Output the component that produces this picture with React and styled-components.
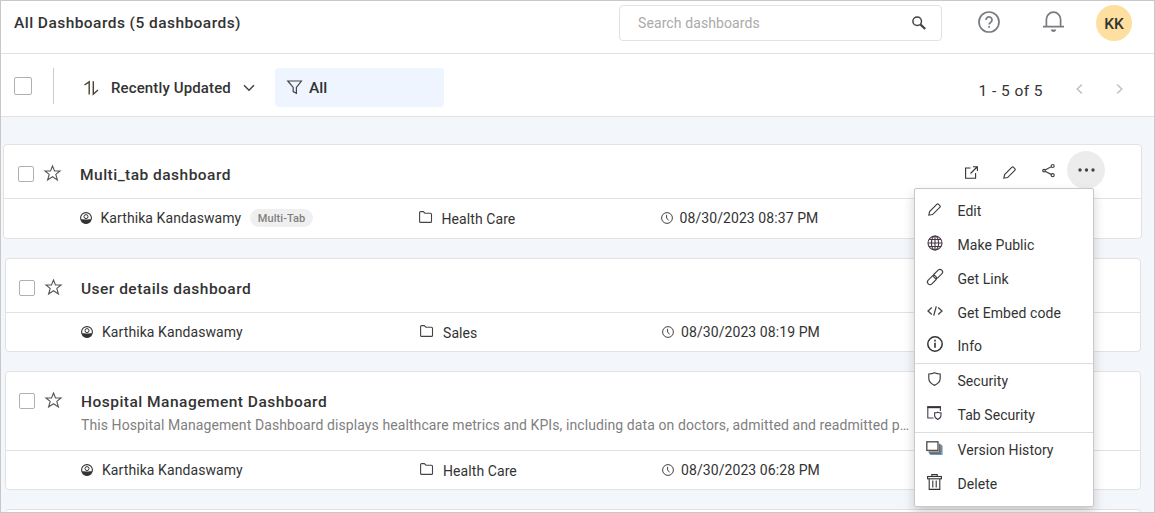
import React from "react";
import styled, { createGlobalStyle } from "styled-components";

const GlobalStyle = createGlobalStyle`
  * { box-sizing: border-box; }
  body {
    margin: 0;
    font-family: Roboto, "Liberation Sans", sans-serif;
    color: #333;
    background: #fff;
  }
`;

const Frame = styled.div`
  position: relative;
  display: flex;
  flex-direction: column;
  width: 1155px;
  height: 513px;
  border: 1px solid #c8c8c8;
  overflow: hidden;
  background: #f3f6fa;
`;

const Svg = styled.svg`
  display: block;
  flex: none;
  fill: none;
  stroke: ${(p) => p.$color || "#333"};
  stroke-width: ${(p) => p.$stroke || 1};
  overflow: visible;
`;

const Icon = ({ w = 16, h = w, color, stroke, children }) => (
  <Svg width={w} height={h} viewBox={`0 0 ${w} ${h}`} $color={color} $stroke={stroke} aria-hidden="true">
    {children}
  </Svg>
);

const SearchIcon = () => (
  <Icon w={14} color="#444">
    <circle cx="5.2" cy="5.2" r="4.3" strokeWidth="1.5" />
    <path d="M8.4 8.4 L13.2 13" strokeWidth="2.2" />
  </Icon>
);
const HelpIcon = () => (
  <Icon w={22} color="#777b80" stroke={1.7}>
    <circle cx="11" cy="11" r="10" />
    <path d="M8 8.9a3 3 0 1 1 4.6 2.5c-1 .6-1.5 1-1.5 2.2" />
    <path d="M11.1 15v1.8" />
  </Icon>
);
const BellIcon = () => (
  <Icon w={21} h={22} color="#777b80" stroke={1.7}>
    <path d="M0 15.7h21M3.4 15.5V8.3a7.1 7.1 0 0 1 14.2 0v7.2" />
    <path d="M7.8 18.6h5.4c-.5 1.8-1.4 2.5-2.7 2.5s-2.2-.7-2.7-2.5z" fill="#777b80" stroke="none" />
  </Icon>
);
const SortIcon = () => (
  <Icon w={15} h={14} color="#4b4030" stroke={1.4}>
    <path d="M.5 4 L5.2 .8V13.5M9.3 .3V13.2L14 9" />
  </Icon>
);
const ChevronIcon = () => (
  <Icon w={12} h={8} color="#444" stroke={1.5}>
    <path d="M1 1.2 6 6.2 11 1.2" />
  </Icon>
);
const FunnelIcon = () => (
  <Icon w={15} h={14} color="#444" stroke={1.2}>
    <path d="M.8 1h13.6L9.4 7.4v5.8L6.2 11.6V7.4z" />
  </Icon>
);
const PageIcon = ({ next }) => (
  <Icon w={7} h={10} color="#c0c3c7" stroke={1.5}>
    <path d={next ? "M1.2.6 5.8 5 1.2 9.4" : "M5.8.6 1.2 5 5.8 9.4"} />
  </Icon>
);
const StarIcon = () => (
  <Icon w={17} h={16} color="#555" stroke={1.1}>
    <path d="M8.5 1 10.5 6H16L11.8 9.4 13.4 15 8.5 11.7 3.6 15 5.2 9.4 1 6H6.5z" />
  </Icon>
);
const UserIcon = () => (
  <Icon w={12}>
    <circle cx="6" cy="6" r="5.4" strokeWidth="1.1" />
    <circle cx="6" cy="4.6" r="2" strokeWidth="1" />
    <path d="M.9 7.4C2.5 6.9 3.4 7.4 4.3 7.4h3.4c.9 0 1.8-.5 3.4 0A5.3 5.3 0 0 1 6 11.4 5.3 5.3 0 0 1 .9 7.4z" fill="#333" stroke="none" />
  </Icon>
);
const FolderIcon = () => (
  <Icon w={13} h={12} color="#444" stroke={1.1}>
    <path d="M1.6.6H4.3L6 2.2h5.5a1 1 0 0 1 1 1v7.2a1 1 0 0 1-1 1H1.6a1 1 0 0 1-1-1V1.6a1 1 0 0 1 1-1z" />
  </Icon>
);
const ClockIcon = () => (
  <Icon w={12} color="#444">
    <circle cx="6" cy="6" r="5.4" />
    <path d="M5.6 2.8V6l2 2.4" />
  </Icon>
);
const OpenIcon = () => (
  <Icon w={13} stroke={1.1}>
    <path d="M5.5 2H.6v10.3h10V7M5.5 7.5 12 1M8 .7h4.4V5" />
  </Icon>
);
const PencilIcon = () => (
  <Icon w={13} color="#3d3540" stroke={1.1}>
    <path d="M.8 12.2 1.6 8.6 9 1.2a1 1 0 0 1 1.4 0L12 2.8a1 1 0 0 1 0 1.4L4.6 11.6z" />
  </Icon>
);
const ShareIcon = () => (
  <Icon w={13} h={13} color="#444" stroke={1.2}>
    <path d="M3 6 9.2 2.8M3 7.2 9.2 10.4" />
    <circle cx="2" cy="6.6" r="1.3" />
    <circle cx="10.7" cy="2" r="1.5" />
    <circle cx="10.7" cy="11.2" r="1.5" />
  </Icon>
);
const MoreIcon = () => (
  <Icon w={17} h={4}>
    <g fill="#444" stroke="none">
      <circle cx="2" cy="2" r="1.7" />
      <circle cx="8.5" cy="2" r="1.7" />
      <circle cx="15" cy="2" r="1.7" />
    </g>
  </Icon>
);
const GlobeIcon = () => (
  <Icon w={16} color="#453845" stroke={1.1}>
    <circle cx="8" cy="8" r="7" />
    <ellipse cx="8" cy="8" rx="3.6" ry="7" />
    <path d="M8 1v14M1 8h14M2 4.5h12M2 11.5h12" />
  </Icon>
);
const LinkIcon = () => (
  <Icon w={16} color="#444" stroke={1.15}>
    <g transform="rotate(-45 8 8)">
      <rect x="-1.6" y="5.4" width="10.6" height="5.2" rx="2.6" />
      <rect x="7" y="5.4" width="10.6" height="5.2" rx="2.6" />
    </g>
  </Icon>
);
const CodeIcon = () => (
  <Icon w={16} h={10} color="#444" stroke={1.3}>
    <path d="M4.8 1.5 1 5l3.8 3.5M11.2 1.5 15 5l-3.8 3.5M9.3.3 6.7 9.7" />
  </Icon>
);
const InfoIcon = () => (
  <Icon w={16}>
    <circle cx="8" cy="8" r="7.2" strokeWidth="1.5" />
    <path d="M8 6.8v5M8 3.8v1.6" strokeWidth="1.6" />
  </Icon>
);
const ShieldIcon = () => (
  <Icon w={13} h={14} color="#444" stroke={1.2}>
    <path d="M6.5.8C5 1.6 3 2 .8 2v4.6c0 3 2.2 5.2 5.7 6.8 3.5-1.6 5.7-3.8 5.7-6.8V2C10 2 8 1.6 6.5.8z" />
  </Icon>
);
const TabShieldIcon = () => (
  <Icon w={15} h={14} color="#4a3c50" stroke={1.1}>
    <path d="M6.5 12H.8V1h12.6v4" />
    <path d="M.3 1.2h13.6" stroke="#333" strokeWidth="2" />
    <path d="M10.8 6.2c-.9.5-1.8.7-3.2.7v2.3c0 2 1.3 3.3 3.2 4.2 1.9-.9 3.2-2.2 3.2-4.2V6.9c-1.4 0-2.3-.2-3.2-.7z" />
  </Icon>
);
const VersionIcon = () => (
  <Icon w={17} h={14} color="#555">
    <path d="M16 4.5v9H4" stroke="#5fa0d0" strokeWidth="1.2" />
    <path d="M13.8 2.8v8.4H2.6" strokeWidth="1.3" />
    <path d="M15 3.8v8.6H3.4" strokeWidth="1" />
    <rect x=".8" y=".8" width="11.2" height="8.6" strokeWidth="1.4" />
  </Icon>
);
const TrashIcon = () => (
  <Icon w={15} h={16} stroke={1.1}>
    <path d="M4.8 2.2V.6h5.4v1.6M2.2 5v10.4h10.6V5M5.8 6.5v7M9.2 6.5v7" />
    <rect x=".6" y="2.5" width="13.8" height="2.3" />
  </Icon>
);

const Header = styled.header`
  display: flex;
  align-items: flex-start;
  flex: none;
  height: 53px;
  padding: 4px 22px 0 13px;
  border-bottom: 1px solid #e2e2e2;
  background: #fff;
`;

const PageTitle = styled.h1`
  flex: 1;
  margin: 0;
  padding-top: 1px;
  font-size: 15.5px;
  font-weight: 500;
  line-height: 34px;
  letter-spacing: 0.45px;
`;

const SearchBox = styled.div`
  display: flex;
  align-items: center;
  justify-content: space-between;
  width: 323px;
  height: 36px;
  padding: 0 15px 0 18px;
  border: 1px solid #e2e2e2;
  border-radius: 4px;
  color: #aaa;
  font-size: 14px;
  letter-spacing: 0.1px;
`;

const HeaderIcon = styled.div`
  margin: 6px 0 0 ${(p) => p.$gap}px;
`;

const Avatar = styled.div`
  width: 36px;
  height: 36px;
  margin-left: 32px;
  border-radius: 50%;
  background: #ffdf9f;
  text-align: center;
  font-size: 15.5px;
  font-weight: 500;
  line-height: 38px;
`;

const Toolbar = styled.div`
  display: flex;
  align-items: center;
  flex: none;
  height: 63px;
  padding: 4px 31px 0 13px;
  border-bottom: 1px solid #e2e2e2;
  background: #fff;
`;

const Checkbox = styled.span`
  flex: none;
  width: ${(p) => p.$size}px;
  height: ${(p) => p.$size}px;
  border: 1px solid #b0b0b0;
  border-radius: 2px;
  background: #fff;
`;

const Separator = styled.span`
  width: 1px;
  height: 36px;
  margin: 0 30px 2px 21px;
  background: #ccc;
`;

const SelectAll = styled.div`
  display: flex;
  padding-bottom: 3px;
`;

const SortButton = styled.div`
  display: flex;
  align-items: center;
  width: 170px;
  gap: 12px;
  padding-top: 1px;
  font-size: 15px;
  font-weight: 500;
  letter-spacing: 0.13px;
  white-space: nowrap;
`;

const FilterBox = styled.div`
  display: flex;
  align-items: center;
  gap: 7px;
  width: 169px;
  height: 39px;
  margin-left: 21px;
  padding-left: 12px;
  border-radius: 4px;
  background: #eff5ff;
  font-size: 15.5px;
  font-weight: 500;
`;

const FilterLabel = styled.span`
  padding-top: 2px;
`;

const Pager = styled.div`
  display: flex;
  align-items: center;
  gap: 33px;
  margin-left: auto;
  padding-top: 3px;
  font-size: 15.5px;
  letter-spacing: 0.45px;
`;

const PageRange = styled.span`
  padding-top: 4px;
`;

const List = styled.main`
  display: flex;
  flex-direction: column;
  gap: 19px;
  padding: 27px 13px 0 4px;
`;

const Card = styled.article`
  flex: none;
  margin: ${(p) => (p.$active ? "0 -1px 0 -2px" : "0")};
  border: 1px solid #e2e2e2;
  border-radius: 4px;
  background: #fff;
`;

const CardTop = styled.div`
  display: flex;
  height: ${(p) => p.$height}px;
  padding: 21px 36px 0 ${(p) => (p.$active ? 14 : 13)}px;
  border-bottom: 1px solid #e2e2e2;
`;

const Star = styled.span`
  margin: -1px 19px 0 10px;
`;

const CardText = styled.div`
  flex: 1;
  min-width: 0;
`;

const CardTitle = styled.h2`
  margin: -1px 0 0;
  font-size: 15.5px;
  font-weight: 500;
  line-height: 20px;
  letter-spacing: 0.48px;
`;

const Description = styled.p`
  margin: 2px 0 0;
  color: #808080;
  font-size: 14px;
  line-height: 22px;
  letter-spacing: 0.09px;
  white-space: nowrap;
`;

const Actions = styled.div`
  display: flex;
  align-items: center;
  gap: 25px;
  height: 38px;
  margin-top: -15px;
`;

const Action = styled.span`
  margin-right: ${(p) => p.$space || 0}px;
  padding-top: 4px;
`;

const MoreButton = styled.span`
  display: flex;
  align-items: center;
  justify-content: center;
  width: 38px;
  height: 38px;
  margin-left: -13px;
  border-radius: 50%;
  background: #ececec;
`;

const Meta = styled.div`
  display: grid;
  grid-template-columns: 339px 242px 1fr;
  height: ${(p) => (p.$active ? 39 : 38)}px;
  padding-left: ${(p) => (p.$active ? 75.5 : 75)}px;
  font-size: 14px;
  line-height: 38px;
  letter-spacing: 0.08px;
`;

const MetaItem = styled.div`
  display: flex;
  align-items: center;
  gap: ${(p) => p.$gap}px;
  height: 38px;
`;

const FolderGlyph = styled.span`
  padding-bottom: 2px;
`;

const FolderName = styled.span`
  padding-top: 2px;
`;

const Tag = styled.span`
  height: 18px;
  padding: 0 7.5px;
  border-radius: 9px;
  background: #efefef;
  color: #808080;
  font-size: 11px;
  font-weight: 500;
  line-height: 19px;
`;

const Menu = styled.div`
  position: absolute;
  left: 913px;
  top: 187px;
  width: 180px;
  height: 319px;
  padding: 5px 0;
  border: 1px solid #c8c8c8;
  border-radius: 2px;
  background: #fff;
  box-shadow: 0 6px 12px rgba(0, 0, 0, 0.18);
`;

const MenuGroup = styled.div`
  & + & { border-top: 1px solid #dedede; }
`;

const MenuItem = styled.div`
  display: flex;
  align-items: center;
  height: ${(p) => p.$height}px;
  padding: 1px 0 0 10px;
  font-size: 14px;
  letter-spacing: 0.06px;

  ${MenuGroup}:first-child &:last-child {
    height: 33px;
    padding: 0 0 0 10px;
    margin-bottom: 0.8px;
  }
`;

const MenuIcon = styled.span`
  display: flex;
  justify-content: center;
  width: 18px;
  margin: 0 14px 4px 0.5px;
`;

const dashboards = [
  { name: "Multi_tab dashboard", folder: "Health Care", time: "08/30/2023 08:37 PM", tag: "Multi-Tab", active: true },
  { name: "User details dashboard", folder: "Sales", time: "08/30/2023 08:19 PM" },
  {
    name: "Hospital Management Dashboard",
    description:
      "This Hospital Management Dashboard displays healthcare metrics and KPIs, including data on doctors, admitted and readmitted p…",
    folder: "Health Care",
    time: "08/30/2023 06:28 PM",
  },
];

const menu = [
  {
    height: 33.8,
    items: [
      [PencilIcon, "Edit"],
      [GlobeIcon, "Make Public"],
      [LinkIcon, "Get Link"],
      [CodeIcon, "Get Embed code"],
      [InfoIcon, "Info"],
    ],
  },
  { height: 34, items: [[ShieldIcon, "Security"], [TabShieldIcon, "Tab Security"]] },
  { height: 34, items: [[VersionIcon, "Version History"], [TrashIcon, "Delete"]] },
];

const DashboardCard = ({ item }) => (
  <Card $active={item.active}>
    <CardTop $height={item.description ? 79 : 54} $active={item.active}>
      <Checkbox $size={16} />
      <Star><StarIcon /></Star>
      <CardText>
        <CardTitle>{item.name}</CardTitle>
        {item.description && <Description>{item.description}</Description>}
      </CardText>
      {item.active && (
        <Actions>
          <Action><OpenIcon /></Action>
          <Action $space={1}><PencilIcon /></Action>
          <ShareIcon />
          <MoreButton><MoreIcon /></MoreButton>
        </Actions>
      )}
    </CardTop>
    <Meta $active={item.active}>
      <MetaItem $gap={9}>
        <UserIcon />
        <span>Karthika Kandaswamy</span>
        {item.tag && <Tag>{item.tag}</Tag>}
      </MetaItem>
      <MetaItem $gap={10}>
        <FolderGlyph><FolderIcon /></FolderGlyph>
        <FolderName>{item.folder}</FolderName>
      </MetaItem>
      <MetaItem $gap={7}>
        <ClockIcon />
        <span>{item.time}</span>
      </MetaItem>
    </Meta>
  </Card>
);

export default function App() {
  return (
    <>
      <GlobalStyle />
      <Frame>
        <Header>
          <PageTitle>All Dashboards (5 dashboards)</PageTitle>
          <SearchBox>
            <span>Search dashboards</span>
            <SearchIcon />
          </SearchBox>
          <HeaderIcon $gap={36}><HelpIcon /></HeaderIcon>
          <HeaderIcon $gap={43}><BellIcon /></HeaderIcon>
          <Avatar>KK</Avatar>
        </Header>
        <Toolbar>
          <SelectAll><Checkbox $size={18} /></SelectAll>
          <Separator />
          <SortButton>
            <SortIcon />
            <span>Recently Updated</span>
            <ChevronIcon />
          </SortButton>
          <FilterBox>
            <FunnelIcon />
            <FilterLabel>All</FilterLabel>
          </FilterBox>
          <Pager>
            <PageRange>1 - 5 of 5</PageRange>
            <PageIcon />
            <PageIcon next />
          </Pager>
        </Toolbar>
        <List>
          {dashboards.map((item) => (
            <DashboardCard key={item.name} item={item} />
          ))}
          <Card><CardTop $height={54} /></Card>
        </List>
        <Menu>
          {menu.map((group, i) => (
            <MenuGroup key={i}>
              {group.items.map(([Glyph, label]) => (
                <MenuItem key={label} $height={group.height}>
                  <MenuIcon><Glyph /></MenuIcon>
                  <span>{label}</span>
                </MenuItem>
              ))}
            </MenuGroup>
          ))}
        </Menu>
      </Frame>
    </>
  );
}
